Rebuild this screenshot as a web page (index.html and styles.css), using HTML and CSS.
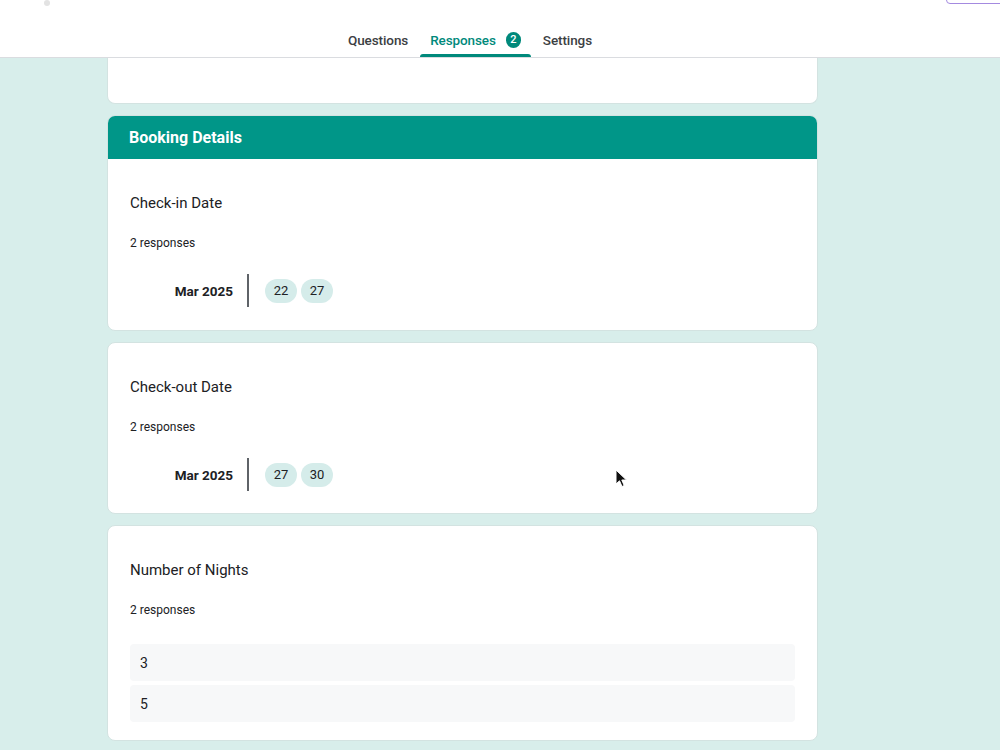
FILE: index.html
```html
<!DOCTYPE html>
<html lang="en">
<head>
<meta charset="utf-8">
<title>Responses</title>
<link rel="stylesheet" href="styles.css">
</head>
<body>
<header class="header">
  <div class="topbar">
    <span class="top-dot"></span>
    <button class="send-btn" aria-label="Send"></button>
  </div>
  <nav class="tabs">
    <a class="tab">Questions</a>
    <a class="tab active">Responses <span class="badge">2</span></a>
    <a class="tab">Settings</a>
  </nav>
</header>

<main class="content">
  <section class="card card-cut"></section>

  <section class="card">
    <div class="section-head">Booking Details</div>
    <div class="card-body card-body-first">
      <h2 class="q-title">Check-in Date</h2>
      <p class="q-count">2 responses</p>
      <div class="date-row">
        <div class="date-month">Mar 2025</div>
        <div class="date-divider"></div>
        <div class="chips">
          <span class="chip">22</span>
          <span class="chip">27</span>
        </div>
      </div>
    </div>
  </section>

  <section class="card">
    <div class="card-body">
      <h2 class="q-title">Check-out Date</h2>
      <p class="q-count">2 responses</p>
      <div class="date-row">
        <div class="date-month">Mar 2025</div>
        <div class="date-divider"></div>
        <div class="chips">
          <span class="chip">27</span>
          <span class="chip">30</span>
        </div>
      </div>
    </div>
  </section>

  <section class="card">
    <div class="card-body card-body-list">
      <h2 class="q-title">Number of Nights</h2>
      <p class="q-count">2 responses</p>
      <ul class="answers">
        <li class="answer">3</li>
        <li class="answer">5</li>
      </ul>
    </div>
  </section>
</main>

<svg class="cursor" width="14" height="20" viewBox="0 0 14 20" aria-hidden="true">
  <path d="M1 1 L1 15 L4.5 11.8 L7 17.5 L9.2 16.5 L6.8 11 L11.5 11 Z" fill="#111" stroke="#fff" stroke-width="1"/>
</svg>
</body>
</html>
```

FILE: styles.css
```css
* { box-sizing: border-box; }

html, body {
  margin: 0;
  padding: 0;
}

body {
  background: #d8eeeb;
  font-family: Roboto, "Noto Sans", Arial, sans-serif;
  color: #202124;
  height: 750px;
  overflow: hidden;
}

.header {
  background: #fff;
  border-bottom: 1px solid #dadce0;
  height: 58px;
  display: flex;
  flex-direction: column;
}

.topbar {
  height: 40px;
  margin-top: -36px;
  display: flex;
  align-items: flex-end;
  justify-content: space-between;
  padding-left: 44px;
}

.top-dot {
  width: 6px;
  height: 6px;
  margin-bottom: -2px;
  border-radius: 50%;
  background: #e3e3e3;
}

.send-btn {
  width: 80px;
  height: 36px;
  margin-right: -26px;
  border: 1px solid #a48ae0;
  border-radius: 4px;
  background: #fff;
}

.tabs {
  flex: 1;
  display: flex;
  justify-content: center;
  align-items: flex-end;
  gap: 2px;
  padding-right: 60px;
}

.tab {
  position: relative;
  display: flex;
  align-items: center;
  gap: 10px;
  padding: 7px 10px 7px;
  line-height: 20px;
  font-size: 13.5px;
  font-weight: 500;
  letter-spacing: -0.1px;
  color: #3c4043;
}

.tab.active {
  color: #00897b;
}

.tab.active::after {
  content: "";
  position: absolute;
  left: 0;
  right: 0;
  bottom: 0;
  height: 3px;
  background: #00897b;
  border-radius: 3px 3px 0 0;
}

.badge {
  display: inline-flex;
  align-items: center;
  justify-content: center;
  width: 15px;
  height: 16px;
  border-radius: 8px;
  background: #00897b;
  color: #fff;
  font-size: 11px;
  font-weight: 500;
  letter-spacing: 0;
}

.content {
  width: 711px;
  margin-left: 107px;
  display: flex;
  flex-direction: column;
  gap: 11px;
}

.card {
  background: #fff;
  border: 1px solid #d3e3e1;
  border-radius: 8px;
  overflow: hidden;
}

.card-cut {
  height: 46px;
  border-top: none;
  border-radius: 0 0 8px 8px;
}

.section-head {
  background: #009688;
  color: #fff;
  height: 44px;
  margin: -1px -1px 0;
  padding: 0 21px 0 22px;
  display: flex;
  align-items: center;
  font-size: 16px;
  font-weight: 700;
}

.card-body {
  padding: 32px 22px 22px;
}

.card-body-first {
  padding-bottom: 23px;
}

.card-body-list {
  padding-bottom: 18px;
}

.q-title {
  margin: 0;
  font-size: 15px;
  font-weight: 400;
  line-height: 24px;
  color: #202124;
}

.q-count {
  margin: 20px 0 0;
  font-size: 12px;
  line-height: 16px;
  color: #202124;
}

.date-row {
  margin-top: 23px;
  height: 33px;
  display: flex;
  align-items: center;
}

.date-month {
  width: 103px;
  text-align: right;
  font-size: 13.5px;
  font-weight: 700;
  color: #202124;
}

.date-divider {
  width: 2px;
  height: 33px;
  background: #5f6368;
  margin: 0 16px 0 14px;
}

.chips {
  display: flex;
  gap: 4px;
}

.chip {
  display: inline-flex;
  align-items: center;
  justify-content: center;
  width: 32px;
  height: 24px;
  border-radius: 12px;
  background: #d5ecea;
  font-size: 13px;
  color: #202124;
}

.answers {
  list-style: none;
  margin: 26px 0 0;
  padding: 0;
  display: flex;
  flex-direction: column;
  gap: 4px;
}

.answer {
  height: 37px;
  display: flex;
  align-items: center;
  padding-left: 10px;
  background: #f7f8f9;
  border-radius: 4px;
  font-size: 14px;
  color: #202124;
}

.cursor {
  position: absolute;
  left: 615px;
  top: 469px;
}
```
